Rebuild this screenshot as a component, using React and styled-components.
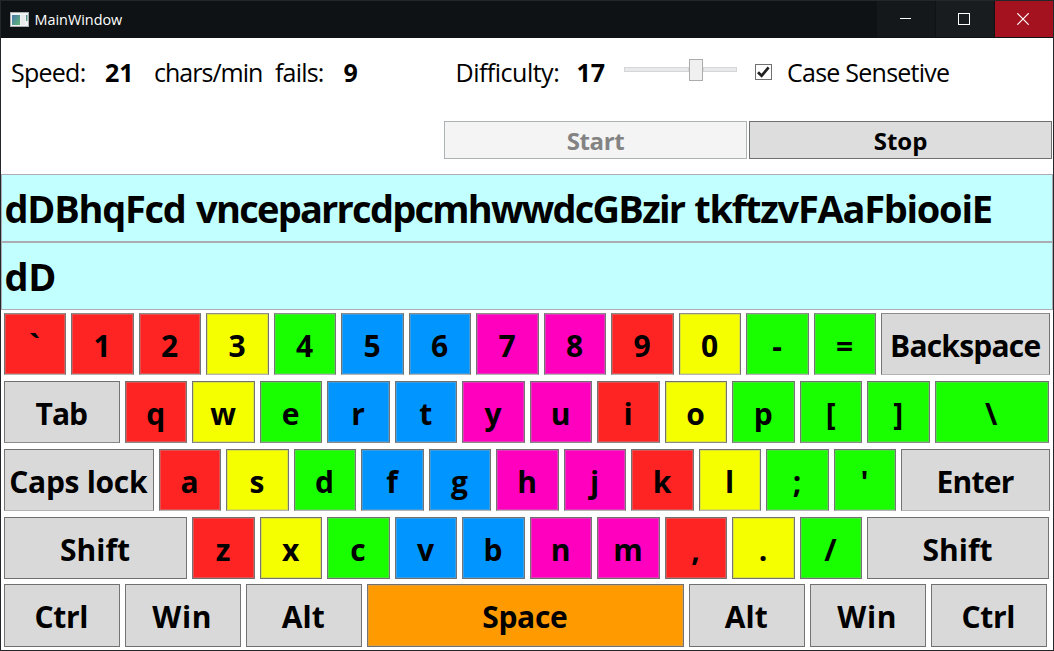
import React from "react";
import styled, { createGlobalStyle } from "styled-components";

const GlobalStyle = createGlobalStyle`
  * { box-sizing: border-box; }
  body { margin: 0; background: #fff; overflow: hidden; }
`;

const Frame = styled.div`
  width: 1054px;
  height: 651px;
  border: 1px solid #23272a;
  background: #fff;
  color: #000;
  font-family: "Open Sans", "Noto Sans", sans-serif;
  display: flex;
  flex-direction: column;
  overflow: hidden;
`;

const TitleBar = styled.header`
  flex: none;
  height: 37px;
  display: flex;
  align-items: center;
  padding-left: 9px;
  background: #0e1214;
  color: #fff;
`;

const AppIcon = styled.svg`
  width: 19px;
  height: 15px;
  margin-right: 5.5px;
`;

const Title = styled.span`
  flex: 1;
  font-size: 14.4px;
  line-height: 20px;
  padding-top: 1px;
`;

const Caption = styled.button`
  width: ${(p) => p.$w || 58}px;
  height: 36px;
  align-self: flex-start;
  margin-left: 1px;
  padding: 0 2px 0 0;
  border: 0;
  display: flex;
  align-items: center;
  justify-content: center;
  background: ${(p) => p.$bg};
`;

const Status = styled.div`
  flex: none;
  height: 69px;
  padding: 0 0 2px 10px;
  display: grid;
  grid-template-columns: 94px 49px 121px 68.5px 112px 121px 47.5px 131px 32px auto;
  align-items: center;
  font-size: 25px;
  line-height: 34px;
  white-space: nowrap;
`;

const Label = styled.span`
  letter-spacing: ${(p) => p.$ls || 0}px;
`;

const Value = styled.b`
  font-weight: 700;
`;

const Slider = styled.div`
  width: 113px;
  height: 22px;
  margin-bottom: 4px;
  display: flex;
  align-items: center;
`;

const Track = styled.div`
  flex: ${(p) => (p.$w ? "none" : 1)};
  width: ${(p) => p.$w}px;
  height: 5px;
  background: #e7eaea;
  border: 1px solid #d6d6d6;
`;

const Thumb = styled.div`
  width: 14px;
  height: 22px;
  background: #f0f0f0;
  border: 1px solid #acacac;
`;

const CheckBox = styled.div`
  width: 17px;
  height: 16px;
  position: relative;
  border: 1px solid #707070;
  background: #fff;
  display: flex;
`;

const Actions = styled.div`
  flex: none;
  height: 67px;
  padding: 14px 1px 0 443px;
  display: flex;
  gap: 2px;
`;

const Action = styled.button`
  flex: 1;
  height: 38px;
  padding: 1px 0 0;
  border: 1px solid ${(p) => (p.disabled ? "#adb2b5" : "#707070")};
  background: ${(p) => (p.disabled ? "#f4f4f4" : "#dddddd")};
  color: ${(p) => (p.disabled ? "#838383" : "#000")};
  font: 700 24px/34px "Open Sans", "Noto Sans", sans-serif;
  letter-spacing: ${(p) => p.$ls || 0}px;
`;

const TextLine = styled.div`
  flex: none;
  height: 68px;
  padding-left: 2.5px;
  border: 1px solid #abadb3;
  background: #c2ffff;
  font-size: 38px;
  font-weight: 700;
  line-height: 66px;
  word-spacing: 1.8px;
  white-space: pre;
`;

const Keyboard = styled.div`
  flex: none;
  padding: 3px 0 0 2.8px;
`;

const Row = styled.div`
  height: ${(p) => p.$h || 62}px;
  margin-bottom: ${(p) => p.$gap}px;
  display: flex;
  gap: 5px;
  --top: ${(p) => p.$top || "#707070"};
  --bottom: ${(p) => p.$bottom || "#707070"};
`;

const COLORS = {
  r: "#ff2424",
  y: "#f6ff00",
  g: "#19ff00",
  b: "#0095ff",
  p: "#ff00bf",
  o: "#ff9b00",
  n: "#d9d9d9",
};

const Key = styled.div`
  flex: none;
  width: ${(p) => p.$w || 62.5}px;
  height: 100%;
  padding: 3px 1px 0 0;
  display: flex;
  align-items: center;
  justify-content: center;
  border: 1px solid #747474;
  border-top-color: var(--top);
  border-bottom-color: var(--bottom);
  background: ${(p) => COLORS[p.$c]};
  box-shadow: ${(p) => (p.$c === "n" ? "none" : "inset 0 0 0 1px rgba(170, 170, 170, 0.35)")};
  font-size: 30px;
  font-weight: 700;
  line-height: 40px;
  letter-spacing: ${(p) => p.$ls || 0}px;
  white-space: pre;
`;

const chars = (text, colors) => [...text].map((t, i) => ({ t, c: colors[i] }));

const ROWS = [
  {
    gap: 6,
    top: "#8c8c8c",
    bottom: "#b4b4b4",
    keys: [...chars("`1234567890-=", "rrrygbbpprygg"), { t: "Backspace", c: "n", w: 168.75, ls: -0.8 }],
  },
  {
    gap: 6,
    bottom: "#8a8a8a",
    keys: [{ t: "Tab", c: "n", w: 116.1, ls: -1 }, ...chars("qwertyuiop[]", "rygbbppryggg"), { t: "\\", c: "g", w: 113.8 }],
  },
  {
    gap: 6,
    bottom: "#b4b4b4",
    keys: [{ t: "Caps lock", c: "n", w: 150, ls: -0.3 }, ...chars("asdfghjkl;'", "rygbbpprygg"), { t: "Enter", c: "n", w: 148.5, ls: -0.8 }],
  },
  {
    gap: 5,
    keys: [{ t: "Shift", c: "n", w: 183.5 }, ...chars("zxcvbnm,./", "rygbbppryg"), { t: "Shift", c: "n", w: 181.5 }],
  },
  {
    gap: 0,
    h: 63,
    keys: [
      { t: "Ctrl", c: "n", w: 116, ls: -0.3 },
      { t: "Win", c: "n", w: 116, ls: 0.7 },
      { t: "Alt", c: "n", w: 116 },
      { t: "Space", c: "o", w: 317, ls: -0.3 },
      { t: "Alt", c: "n", w: 116 },
      { t: "Win", c: "n", w: 116, ls: 0.7 },
      { t: "Ctrl", c: "n", w: 116, ls: -0.3 },
    ],
  },
];

export default function App() {
  return (
    <>
      <GlobalStyle />
      <Frame>
        <TitleBar>
          <AppIcon viewBox="0 0 19 15">
            <defs>
              <linearGradient id="pane" x1="0" y1="0" x2="1" y2="1">
                <stop offset="0" stopColor="#4a78b0" />
                <stop offset="1" stopColor="#5fb573" />
              </linearGradient>
            </defs>
            <rect x="0.5" y="0.5" width="18" height="14" fill="#f1f2f3" stroke="#a9adb1" />
            <rect x="2" y="3" width="8" height="10" fill="url(#pane)" />
            <rect x="11" y="3" width="4" height="10" fill="#e9ebec" />
            <rect x="16" y="3" width="1.5" height="6" fill="url(#pane)" />
          </AppIcon>
          <Title>MainWindow</Title>
          <Caption $bg="#14181a" aria-label="Minimize">
            <svg width="12" height="12" viewBox="0 0 12 12">
              <path d="M1 5.5H13" stroke="#fff" />
            </svg>
          </Caption>
          <Caption $bg="#181c1f" aria-label="Maximize">
            <svg width="12" height="12" viewBox="0 0 12 12">
              <rect x="0.5" y="0.5" width="11" height="11" fill="none" stroke="#fff" />
            </svg>
          </Caption>
          <Caption $bg="#a4121f" aria-label="Close">
            <svg width="12" height="12" viewBox="0 0 12 12">
              <path d="M0.3 0.3L11.7 11.7M11.7 0.3L0.3 11.7" stroke="#fff" strokeWidth="1.2" />
            </svg>
          </Caption>
        </TitleBar>
        <Status>
          <Label $ls={-0.75}>Speed:</Label>
          <Value>21</Value>
          <Label $ls={-0.98}>chars/min</Label>
          <Label $ls={-0.8}>fails:</Label>
          <Value>9</Value>
          <Label $ls={-0.5}>Difficulty:</Label>
          <Value>17</Value>
          <Slider>
            <Track $w={65} />
            <Thumb />
            <Track />
          </Slider>
          <CheckBox>
            <svg width="15" height="14" viewBox="0 0 15 14">
              <path d="M2 7.2L5.6 10.8L12.6 2.4" fill="none" stroke="#212121" strokeWidth="2.7" />
            </svg>
          </CheckBox>
          <Label $ls={-0.75}>Case Sensetive</Label>
        </Status>
        <Actions>
          <Action disabled $ls={-0.4}>Start</Action>
          <Action>Stop</Action>
        </Actions>
        <TextLine>
          <Label $ls={-1.25}>dDBhqFcd </Label>
          <Label $ls={-1.76}>vnceparrcdpcmhwwdcGBzir </Label>
          <Label $ls={-1.27}>tkftzvFAaFbiooiE</Label>
        </TextLine>
        <TextLine>
          <Label $ls={-0.3}>dD</Label>
        </TextLine>
        <Keyboard>
          {ROWS.map((row, i) => (
            <Row key={i} $h={row.h} $gap={row.gap} $top={row.top} $bottom={row.bottom}>
              {row.keys.map((k, j) => (
                <Key key={j} $w={k.w} $c={k.c} $ls={k.ls}>
                  {k.t}
                </Key>
              ))}
            </Row>
          ))}
        </Keyboard>
      </Frame>
    </>
  );
}
